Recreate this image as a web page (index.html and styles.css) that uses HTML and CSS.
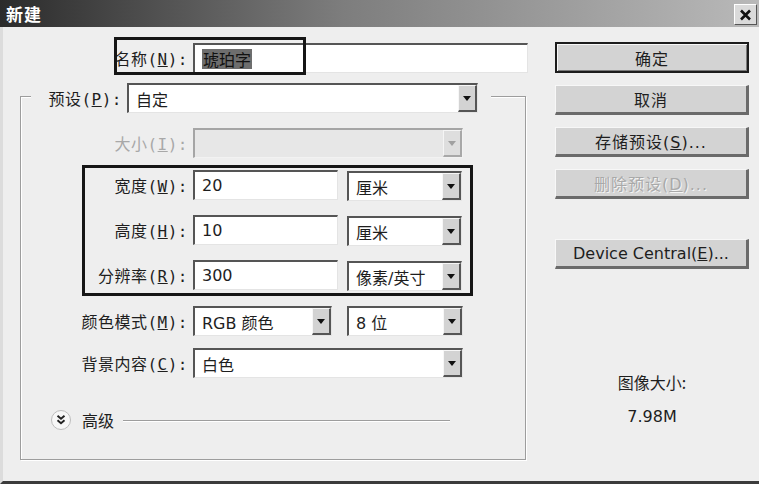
FILE: index.html
```html
<!DOCTYPE html>
<html lang="zh-CN">
<head>
  <meta charset="UTF-8">
  <title>新建</title>
  <link rel="stylesheet" href="styles.css">
</head>
<body>
  <div class="dialog">
    <div class="titlebar">
      <span class="title">新建</span>
      <span class="close">
        <svg width="13" height="12" viewBox="0 0 13 12"><path d="M2 1.5l9 9M11 1.5l-9 9" stroke="#111" stroke-width="2.6" fill="none"/></svg>
      </span>
    </div>

    <div class="content">
      <div class="main">
        <div class="row name-row">
          <label class="lbl">名称(<u>N</u>):</label>
          <div class="input name-input"><span class="sel">琥珀字</span></div>
          <div class="mark-name"></div>
        </div>

        <div class="group">
          <div class="legend">
            <label class="lbl legend-lbl">预设(<u>P</u>):</label>
            <div class="select preset"><span class="val">自定</span><span class="arrow"></span></div>
          </div>

          <div class="row size-row disabled">
            <label class="lbl">大小(<u>I</u>):</label>
            <div class="select size"><span class="val"></span><span class="arrow"></span></div>
          </div>

          <div class="mark-box">
            <div class="row">
              <label class="lbl box-lbl">宽度(<u>W</u>):</label>
              <div class="input dim"><span class="val">20</span></div>
              <div class="select unit"><span class="val">厘米</span><span class="arrow"></span></div>
            </div>
            <div class="row">
              <label class="lbl box-lbl">高度(<u>H</u>):</label>
              <div class="input dim"><span class="val">10</span></div>
              <div class="select unit"><span class="val">厘米</span><span class="arrow"></span></div>
            </div>
            <div class="row">
              <label class="lbl box-lbl">分辨率(<u>R</u>):</label>
              <div class="input dim"><span class="val">300</span></div>
              <div class="select unit"><span class="val">像素/英寸</span><span class="arrow"></span></div>
            </div>
          </div>

          <div class="row mode-row">
            <label class="lbl">颜色模式(<u>M</u>):</label>
            <div class="select mode"><span class="val">RGB 颜色</span><span class="arrow"></span></div>
            <div class="select bits"><span class="val">8 位</span><span class="arrow"></span></div>
          </div>

          <div class="row bg-row">
            <label class="lbl">背景内容(<u>C</u>):</label>
            <div class="select bg"><span class="val">白色</span><span class="arrow"></span></div>
          </div>

          <div class="advanced">
            <svg width="22" height="22" viewBox="0 0 22 22"><circle cx="11" cy="11" r="9.5" fill="#f7f7f7" stroke="#bdbdbd"/><path d="M7.5 6.8l3.5 3 3.5-3M7.5 11.2l3.5 3 3.5-3" fill="none" stroke="#222" stroke-width="1.9"/></svg>
            <span class="adv-text">高级</span>
            <span class="adv-line"></span>
          </div>
        </div>
      </div>

      <div class="side">
        <button class="btn default">确定</button>
        <button class="btn">取消</button>
        <button class="btn">存储预设(<u>S</u>)...</button>
        <button class="btn off">删除预设(<u>D</u>)...</button>
        <button class="btn device">Device Central(<u>E</u>)...</button>
        <div class="info">
          <span class="info-title">图像大小:</span>
          <span class="info-value">7.98M</span>
        </div>
      </div>
    </div>
  </div>
</body>
</html>
```

FILE: styles.css
```css
:root {
  --face: #eeeeee;
  --btn: #d3d3d3;
  --dark: #555555;
  --light: #f7f7f7;
  --text: #1e1e1e;
  --sans: "DejaVu Sans", "Noto Sans CJK SC", sans-serif;
  --label: "DejaVu Sans Mono", "Noto Sans CJK SC", monospace;
}

* {
  box-sizing: border-box;
  margin: 0;
  padding: 0;
}

body {
  width: 759px;
  height: 484px;
  overflow: hidden;
  background: var(--face);
  font-family: var(--sans);
  font-size: 16px;
  color: var(--text);
}

.dialog {
  height: 484px;
  display: flex;
  flex-direction: column;
  border-left: 3px solid #dcdcdc;
  border-bottom: 3px solid #3c3c3c;
}

/* Title bar */
.titlebar {
  height: 27px;
  margin-left: -3px;
  background: linear-gradient(to right, #2b2b2b, #7d7d7d 45%, #b9b9b9);
  display: flex;
  align-items: center;
  justify-content: space-between;
  padding: 0 2px 0 6px;
}

.title {
  color: #fff;
  font-family: "Noto Sans CJK SC", sans-serif;
  font-weight: bold;
  font-size: 17px;
  letter-spacing: 1px;
}

.close {
  width: 23px;
  height: 21px;
  margin-top: 2px;
  background: #dadada;
  border: 1px solid;
  border-color: #fff #555 #555 #fff;
  display: flex;
  align-items: center;
  justify-content: center;
}

.content {
  flex: 1;
  display: flex;
  padding-left: 17px;
}

/* Left form */
.main {
  width: 508px;
  padding-top: 16px;
}

.row {
  display: flex;
  align-items: center;
  height: 30px;
}

.lbl {
  font-family: var(--label);
  letter-spacing: 0.5px;
  text-align: right;
  padding-right: 5px;
  white-space: nowrap;
  flex-shrink: 0;
}

.name-row {
  position: relative;
}

.name-row .lbl {
  width: 173px;
}

.input {
  height: 30px;
  background: #fff;
  border-style: solid;
  border-width: 2px 1px 1px 2px;
  border-color: var(--dark) #e4e4e4 #e4e4e4 var(--dark);
  display: flex;
  align-items: center;
  padding-left: 7px;
}

.name-input {
  width: 335px;
}

.sel {
  background: #6e6e6e;
  color: #111;
  font-family: "Noto Sans CJK SC", sans-serif;
  padding: 0 1px;
  line-height: 20px;
}

.mark-name {
  position: absolute;
  left: 94px;
  top: -6px;
  width: 192px;
  height: 38px;
  border: 3px solid #161616;
}

/* Group box */
.group {
  margin-top: 23px;
  width: 506px;
  height: 364px;
  border: 1px solid #9d9d9d;
  box-shadow: inset 1px 1px 0 #fff, 1px 1px 0 #fff;
}

.legend {
  display: flex;
  align-items: center;
  margin: -14px 0 0 10px;
  width: 460px;
  padding-right: 12px;
  background: var(--face);
}

.legend-lbl {
  width: 96px;
}

.select {
  height: 30px;
  background: #fff;
  border-style: solid;
  border-width: 2px 1px 1px 2px;
  border-color: var(--dark) #e4e4e4 #e4e4e4 var(--dark);
  display: flex;
  align-items: center;
  padding-left: 7px;
}

.val {
  white-space: nowrap;
}

.arrow {
  margin-left: auto;
  width: 19px;
  height: 100%;
  background: var(--btn);
  border-style: solid;
  border-width: 1px 2px 2px 1px;
  border-color: var(--light) var(--dark) var(--dark) var(--light);
  display: flex;
  align-items: center;
  justify-content: center;
  flex-shrink: 0;
}

.arrow::after {
  content: "";
  border-left: 4px solid transparent;
  border-right: 4px solid transparent;
  border-top: 5px solid #111;
}

.preset { width: 351px; }

.group > .row .lbl {
  width: 172px;
}

.size-row {
  margin-top: 15px;
}

.size {
  width: 270px;
}

.disabled .lbl {
  color: #a8a8a8;
}

.disabled .select {
  background: #e7e7e7;
  border-color: #a5a5a5 #f2f2f2 #f2f2f2 #a5a5a5;
}

.disabled .arrow {
  background: #dedede;
  border-color: #f5f5f5 #a8a8a8 #a8a8a8 #f5f5f5;
}

.disabled .arrow::after {
  border-top-color: #a0a0a0;
}

/* Highlighted size block */
.mark-box {
  margin: 7px 0 0 61px;
  width: 391px;
  height: 131px;
  border: 3px solid #161616;
  padding-top: 2px;
  display: flex;
  flex-direction: column;
  gap: 15px;
}

.box-lbl {
  width: 108px;
}

.dim {
  width: 145px;
}

.unit {
  width: 115px;
  margin-left: 9px;
  margin-top: 2px;
}

.mode-row {
  margin-top: 10px;
}

.mode {
  width: 139px;
}

.bits {
  width: 116px;
  margin-left: 15px;
}

.bg-row {
  margin-top: 12px;
}

.bg {
  width: 270px;
}

.advanced {
  margin-top: 30px;
  display: flex;
  align-items: center;
  height: 24px;
  padding-left: 29px;
}

.adv-text {
  margin-left: 10px;
  font-family: "Noto Sans CJK SC", sans-serif;
}

.adv-line {
  flex: 1;
  height: 1px;
  margin: 0 75px 0 9px;
  background: #9d9d9d;
  box-shadow: 0 1px 0 #fff;
}

/* Right buttons */
.side {
  width: 194px;
  margin-left: 27px;
  padding-top: 15px;
  display: flex;
  flex-direction: column;
}

.btn {
  height: 30px;
  margin-top: 12px;
  background: var(--btn);
  border-style: solid;
  border-width: 1px 3px 3px 1px;
  border-color: var(--light) #6a6a6a #6a6a6a var(--light);
  font-family: var(--sans);
  font-size: 16px;
  letter-spacing: 1px;
  color: var(--text);
}

.default {
  margin-top: 0;
  height: 31px;
  border: 2px solid #1c1c1c;
  box-shadow: inset 1px 1px 0 var(--light), inset -1px -1px 0 #7a7a7a;
}

.off {
  color: #a9a9a9;
  text-shadow: 1px 1px 0 #f4f4f4;
}

.device {
  margin-top: 40px;
  letter-spacing: 0;
}

.info {
  margin-top: 101px;
  display: flex;
  flex-direction: column;
  align-items: center;
  gap: 11px;
  line-height: 24px;
}

.info-title {
  font-family: "Noto Sans CJK SC", sans-serif;
}
```
